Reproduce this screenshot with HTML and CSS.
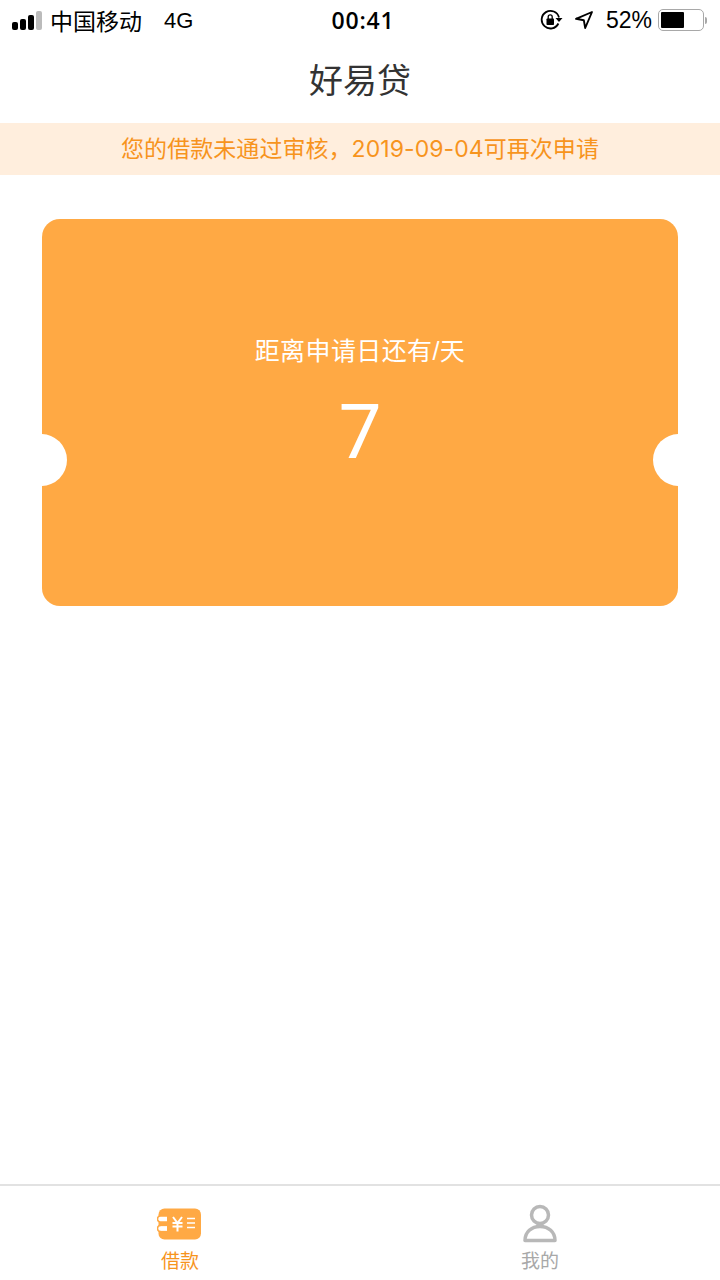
FILE: index.html
```html
<!DOCTYPE html>
<html lang="zh">
<head>
  <meta charset="utf-8">
  <title>好易贷</title>
  <link rel="stylesheet" href="styles.css">
</head>
<body>
<div class="page">
  <div class="status">
    <div class="status-left">
      <div class="signal">
        <span class="bar b1"></span><span class="bar b2"></span><span class="bar b3"></span><span class="bar b4"></span>
      </div>
      <span class="carrier">中国移动</span>
      <span class="net">4G</span>
    </div>
    <div class="clock">00:41</div>
    <div class="status-right">
      <svg class="lock-icon" width="23" height="22" viewBox="0 0 23 22">
        <path d="M18.400 14.500A8.800 8.800 0 1 1 19 8.500" fill="none" stroke="#000" stroke-width="1.800"/>
        <path d="M15.500 9h7l-3.500 4z" fill="#000"/>
        <rect x="6.500" y="9.500" width="7.500" height="6.500" rx="0.800" fill="#000"/>
        <path d="M8.200 10V7.800a2 2 0 0 1 4 0V10" fill="none" stroke="#000" stroke-width="1.300"/>
      </svg>
      <svg class="loc-icon" width="20" height="20" viewBox="0 0 20 20">
        <path d="M18 2 2 8.800l7.800 1.400 1.400 7.800z" fill="none" stroke="#000" stroke-width="1.900" stroke-linejoin="round"/>
      </svg>
      <span class="percent">52%</span>
      <div class="battery"><div class="battery-fill"></div></div>
      <div class="battery-tip"></div>
    </div>
  </div>

  <div class="title">好易贷</div>
  <div class="notice">您的借款未通过审核，2019-09-04可再次申请</div>

  <div class="card">
    <div class="card-label">距离申请日还有/天</div>
    <div class="card-num">7</div>
    <span class="notch notch-left"></span>
    <span class="notch notch-right"></span>
  </div>

  <div class="spacer"></div>

  <div class="tabbar">
    <div class="tab tab-on">
      <svg width="44" height="32" viewBox="0 0 44 32">
        <rect x="1.500" y="0.500" width="42.500" height="31" rx="6" fill="#ffa944"/>
        <path d="M10 8H3.500a3 3 0 0 0 0 6H10M10 17.500H3.500a3 3 0 0 0 0 6H10" fill="#fff" stroke="#ffa944" stroke-width="1.500"/>
        <path d="M10 9.800H4M10 12.200H4M10 19.300H4M10 21.700H4" stroke="#fff" stroke-width="1.500"/>
        <path d="M16 9l4.500 6 4.500-6M15.500 15h10M15.500 18.500h10M20.500 15v8.500" fill="none" stroke="#fff" stroke-width="2"/>
        <path d="M30 10.500h8M30 15h8M30 19.500h8" fill="none" stroke="#fff" stroke-width="1.600"/>
      </svg>
      <span class="tab-text">借款</span>
    </div>
    <div class="tab">
      <svg width="36" height="40" viewBox="0 0 36 40">
        <circle cx="18" cy="11" r="8.500" fill="none" stroke="#b8b8b8" stroke-width="3.500"/>
        <path d="M3 36.500C3 28 9.500 22.500 18 22.500S33 28 33 36.500z" fill="none" stroke="#b8b8b8" stroke-width="3.500" stroke-linejoin="round"/>
      </svg>
      <span class="tab-text">我的</span>
    </div>
  </div>
</div>
</body>
</html>
```

FILE: styles.css
```css
html, body {margin: 0; padding: 0; background: #fff;}
body {font-family: "Liberation Sans", "Noto Sans CJK SC", sans-serif;}

.page {display: flex; flex-direction: column; width: 720px; height: 1280px; overflow: hidden;}

.status {display: flex; justify-content: space-between; align-items: center; height: 40px; padding: 0 13px 0 12px; color: #000; font-size: 24px; position: relative;}
.status-left {display: flex; align-items: center;}
.signal {display: flex; align-items: flex-end; gap: 2px; margin-right: 8px; height: 20px;}
.bar {display: block; width: 6px; background: #000; border-radius: 2px;}
.b1 {height: 8px;}
.b2 {height: 11px;}
.b3 {height: 15px;}
.b4 {height: 19px; background: #bbb;}
.carrier {font-size: 23px;}
.net {margin-left: 22px; font-size: 22px; padding-top: 2px;}
.clock {position: absolute; left: 6px; right: 0; text-align: center; font-family: "Open Sans", sans-serif; font-weight: 600; font-size: 23px; letter-spacing: 0.800px;}
.status-right {display: flex; align-items: center;}
.lock-icon {margin-right: 11px;}
.loc-icon {margin-right: 12px;}
.percent {font-size: 23px; margin-right: 6px; padding-top: 1px;}
.battery {box-sizing: border-box; width: 46px; height: 22px; border: 1.500px solid #a8a8a8; border-radius: 5px; padding: 2px;}
.battery-fill {width: 23px; height: 100%; background: #000; border-radius: 1px;}
.battery-tip {width: 2px; height: 7px; background: #a8a8a8; margin-left: 1px; border-radius: 0 2px 2px 0;}

.title {height: 83px; line-height: 82px; text-align: center; font-size: 34px; color: #333;}

.notice {height: 52px; line-height: 53px; text-align: center; font-size: 23px; letter-spacing: 0.060px; color: #f7941d; background: #ffeedd; font-family: "Inter", "Noto Sans CJK SC", sans-serif;}

.card {position: relative; box-sizing: border-box; width: 636px; height: 387px; margin: 44px 0 0 42px; padding-top: 114px; background: #ffa944; border-radius: 18px; overflow: hidden; color: #fff; text-align: center;}
.card-label {font-size: 25px; line-height: 36px; letter-spacing: 0.400px;}
.card-num {font-size: 76px; line-height: 92px; margin-top: 17px; font-family: "Roboto", sans-serif; font-weight: 400;}
.notch {position: absolute; top: 215px; width: 52px; height: 52px; border-radius: 50%; background: #fff;}
.notch-left {left: -27px;}
.notch-right {right: -27px;}

.spacer {flex: 1;}

.tabbar {display: flex; height: 94px; border-top: 2px solid #e2e2e2;}
.tab {display: flex; flex: 1; flex-direction: column; align-items: center; justify-content: flex-end; padding-bottom: 6px; gap: 6px; color: #a8a8a8;}
.tab-on {color: #f7941d; gap: 10px;}
.tab-on svg {margin-right: 2px;}
.tab-text {font-size: 19px; line-height: 24px;}
```
